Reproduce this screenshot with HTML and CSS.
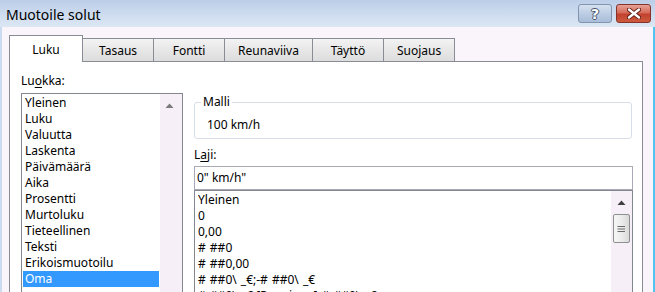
FILE: index.html
```html
<!DOCTYPE html>
<html>
<head>
<meta charset="utf-8">
<link rel="stylesheet" href="styles.css">
</head>
<body>
<div class="window">
  <div class="titlebar">
    <span class="title">Muotoile solut</span>
    <div class="caption">
      <div class="cbtn help"><span class="q">?</span></div>
      <div class="cbtn close">
        <svg width="14" height="11" viewBox="0 0 14 11">
          <path d="M2 1.5 L12 9.5 M12 1.5 L2 9.5" stroke="#5b1c12" stroke-width="4.2" stroke-linecap="round"/>
          <path d="M2 1.5 L12 9.5 M12 1.5 L2 9.5" stroke="#fff" stroke-width="2.4" stroke-linecap="round"/>
        </svg>
      </div>
    </div>
  </div>
  <div class="frame">
    <div class="tabs">
      <div class="tab active">Luku</div>
      <div class="tab">Tasaus</div>
      <div class="tab">Fontti</div>
      <div class="tab">Reunaviiva</div>
      <div class="tab">Täyttö</div>
      <div class="tab">Suojaus</div>
    </div>
    <div class="panel">
      <div class="leftcol">
        <div class="label">Lu<u>o</u>kka:</div>
        <div class="listbox">
          <ul class="items">
            <li>Yleinen</li>
            <li>Luku</li>
            <li>Valuutta</li>
            <li>Laskenta</li>
            <li>Päivämäärä</li>
            <li>Aika</li>
            <li>Prosentti</li>
            <li>Murtoluku</li>
            <li>Tieteellinen</li>
            <li>Teksti</li>
            <li>Erikoismuotoilu</li>
            <li class="sel">Oma</li>
          </ul>
          <div class="sb">
            <div class="arrow">
              <svg width="9" height="5" viewBox="0 0 9 5"><polygon points="0.5,5 4.5,0.5 8.5,5" fill="#7a7a7a"/></svg>
            </div>
          </div>
        </div>
      </div>
      <div class="rightcol">
        <fieldset class="group">
          <legend>Malli</legend>
          <div class="sample">100 km/h</div>
        </fieldset>
        <div class="label laji">L<u>a</u>ji:</div>
        <div class="textbox">0" km/h"</div>
        <div class="fmtlist">
          <ul class="items fmt">
            <li>Yleinen</li>
            <li>0</li>
            <li>0,00</li>
            <li># ##0</li>
            <li># ##0,00</li>
            <li># ##0\ _€;-# ##0\ _€</li>
            <li># ##0\ _€;[Punainen]-# ##0\ _€</li>
          </ul>
          <div class="sb">
            <div class="arrow">
              <svg width="9" height="5" viewBox="0 0 9 5"><polygon points="0.5,5 4.5,0.5 8.5,5" fill="#404040"/></svg>
            </div>
            <div class="thumb">
              <svg width="9" height="8" viewBox="0 0 9 8">
                <path d="M0.5 1.5 H8 M0.5 4 H8 M0.5 6.5 H8" stroke="#6b6b6b" stroke-width="1"/>
              </svg>
            </div>
          </div>
        </div>
      </div>
    </div>
  </div>
</div>
</body>
</html>
```
FILE: styles.css
```css
html, body {
  margin: 0;
  padding: 0;
  height: 100%;
  overflow: hidden;
}
body {
  font-family: "Noto Sans", "DejaVu Sans", sans-serif;
  font-size: 12px;
  color: #000;
}
.window {
  width: 655px;
  height: 292px;
  display: flex;
  flex-direction: column;
  background: #faf5fa;
}
.titlebar {
  height: 27px;
  flex: none;
  display: flex;
  justify-content: space-between;
  align-items: flex-start;
  background: linear-gradient(#bccee8, #d3e0f1 70%, #dde7f4);
}
.title {
  font-size: 14px;
  line-height: 20px;
  margin: 5px 0 0 6px;
}
.caption {
  display: flex;
  gap: 4px;
  margin: 4px 4px 0 0;
}
.cbtn {
  height: 19px;
  box-sizing: border-box;
  border-radius: 3px;
  display: flex;
  align-items: center;
  justify-content: center;
}
.help {
  width: 34px;
  border: 1px solid #8194b0;
  background: linear-gradient(#d6e1ef, #bccde4 50%, #a9bdd8);
}
.q {
  font-family: "DejaVu Sans", sans-serif;
  font-weight: bold;
  font-size: 14px;
  line-height: 16px;
  color: #fff;
  text-shadow: 1px 0 0 #44536b, -1px 0 0 #44536b, 0 1px 0 #44536b, 0 -1px 0 #44536b;
}
.close {
  width: 35px;
  border: 1px solid #86322a;
  background: linear-gradient(#e7a197, #d66b59 45%, #c2412d 55%, #cd5b3f);
}
.frame {
  flex: 1;
  display: flex;
  flex-direction: column;
  min-height: 0;
  padding: 8px 10px 0 7px;
  border-left: 2px solid #cbdcf0;
  border-right: 2px solid #52c4f4;
}
.tabs {
  height: 26px;
  flex: none;
  display: flex;
  align-items: flex-end;
  position: relative;
  z-index: 1;
}
.tab {
  box-sizing: border-box;
  height: 23px;
  min-width: 72px;
  padding: 1px 13px 0;
  line-height: 22px;
  text-align: center;
  border: 1px solid #898c95;
  border-bottom: none;
  margin-left: -1px;
  background: linear-gradient(#f3f3f3, #e8e8e8 45%, #dddddd);
}
.tab.active {
  height: 27px;
  width: 74px;
  margin-left: 0;
  margin-bottom: -1px;
  padding-top: 3px;
  background: #fff;
  position: relative;
  z-index: 2;
}
.panel {
  flex: 1;
  min-height: 0;
  display: flex;
  gap: 11px;
  padding: 11px 9px 0 11px;
  border: 1px solid #898c95;
  border-bottom: none;
  background: #fff;
  overflow: hidden;
}
.leftcol {
  width: 162px;
  flex: none;
  display: flex;
  flex-direction: column;
}
.label {
  line-height: 16px;
  height: 16px;
}
.label u {
  text-decoration-thickness: 1px;
  text-underline-offset: 2px;
}
.listbox {
  margin-top: 4px;
  flex: 1;
  display: flex;
  border: 1px solid #828790;
  border-bottom: none;
  min-height: 0;
}
.items {
  list-style: none;
  margin: 0;
  padding: 1px;
  flex: 1;
  min-width: 0;
}
.items li {
  height: 16px;
  line-height: 16px;
  padding-left: 2px;
  white-space: nowrap;
}
.items li.sel {
  background: #3399ff;
  color: #fff;
}
.sb {
  width: 22px;
  flex: none;
  display: flex;
  flex-direction: column;
  align-items: center;
  background: #f7eff7;
}
.arrow {
  height: 22px;
  display: flex;
  align-items: center;
  justify-content: center;
}
.listbox .arrow {
  padding-right: 3px;
}
.rightcol {
  width: 439px;
  flex: none;
  display: flex;
  flex-direction: column;
  padding-top: 22px;
  min-height: 0;
}
.group {
  margin: 0 1px 0 0;
  padding: 8px 10px 5px 12px;
  border: 1px solid #d6dfe8;
  border-radius: 3px;
}
.group legend {
  padding: 0 2px;
  margin-left: -6px;
  line-height: 14px;
}
.sample {
  line-height: 16px;
}
.laji {
  margin-top: 8px;
  margin-bottom: 3px;
}
.textbox {
  box-sizing: border-box;
  height: 24px;
  line-height: 22px;
  padding-left: 2px;
  border: 1px solid #a9a9b6;
  white-space: nowrap;
}
.fmtlist {
  flex: 1;
  min-height: 0;
  display: flex;
  border: 1px solid #828790;
  border-bottom: none;
}
.items.fmt {
  padding: 1px 0 0 3px;
  word-spacing: 1px;
}
.items.fmt li {
  padding-left: 0;
}
.fmtlist .sb {
  width: 21px;
}
.thumb {
  margin-top: 1px;
  width: 17px;
  height: 29px;
  box-sizing: border-box;
  border: 1px solid #8e8f8f;
  border-radius: 2px;
  background: linear-gradient(to right, #f6f6f6, #ececec 50%, #d9d9d9);
  display: flex;
  align-items: center;
  justify-content: center;
}
```
